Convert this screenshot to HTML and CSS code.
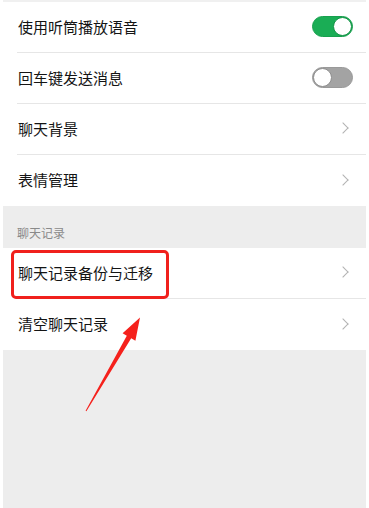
FILE: index.html
```html
<!doctype html>
<html>
<head>
  <meta charset="utf-8">
  <link rel="stylesheet" href="styles.css">
</head>
<body>
  <div class="screen">
    <div class="top-strip"></div>
    <div class="group">
      <div class="row">
        <span class="label">使用听筒播放语音</span>
        <span class="switch on"><span class="knob"></span></span>
      </div>
      <div class="row">
        <span class="label">回车键发送消息</span>
        <span class="switch"><span class="knob"></span></span>
      </div>
      <div class="row">
        <span class="label">聊天背景</span>
        <span class="chevron"></span>
      </div>
      <div class="row last">
        <span class="label">表情管理</span>
        <span class="chevron"></span>
      </div>
    </div>
    <div class="section-title">聊天记录</div>
    <div class="group">
      <div class="row">
        <span class="label">聊天记录备份与迁移</span>
        <span class="chevron"></span>
      </div>
      <div class="row last">
        <span class="label">清空聊天记录</span>
        <span class="chevron"></span>
      </div>
    </div>
    <div class="filler"></div>

    <div class="mark-box"></div>
    <svg class="mark-arrow" width="369" height="508" viewBox="0 0 369 508">
      <polygon fill="#f5211c" points="85.6,410.7 126.8,335.7 122.6,333.2 140,317.5 135.4,340.8 131.2,338.3 86.4,411.3"/>
    </svg>
  </div>
</body>
</html>
```

FILE: styles.css
```css
html, body {
  margin: 0;
  padding: 0;
}
body {
  font-family: "Noto Sans CJK SC", "Noto Sans", sans-serif;
  background: #fff;
}
.screen {
  position: relative;
  width: 363px;
  height: 508px;
  padding: 0 3px;
  display: flex;
  flex-direction: column;
  background: #fff;
  overflow: hidden;
}
.top-strip {
  height: 2px;
  background: #f0f0f0;
}
.group {
  background: #fff;
}
.row {
  height: 50px;
  box-sizing: border-box;
  display: flex;
  align-items: center;
  justify-content: space-between;
  padding: 0 14px 2px 1px;
  margin-left: 14px;
  border-bottom: 1px solid #e6e6e6;
  height: 51px;
}
.row.last {
  border-bottom: none;
}
.label {
  font-size: 15px;
  color: #141414;
}
.switch {
  width: 39px;
  height: 19px;
  border-radius: 11px;
  background: #a3a3a3;
  border: 1px solid #999;
  position: relative;
  margin-right: -1px;
}
.switch .knob {
  position: absolute;
  top: 0;
  left: 0;
  width: 19px;
  height: 19px;
  border-radius: 50%;
  background: #fff;
  box-sizing: border-box;
  border: 1px solid #8e8e8e;
}
.switch.on {
  background: #1aad55;
  border-color: #18a04e;
}
.switch.on .knob {
  left: auto;
  right: 0;
  border-color: #149447;
}
.chevron {
  width: 7px;
  height: 7px;
  border-top: 1px solid #b2b2b2;
  border-right: 1px solid #b2b2b2;
  transform: rotate(45deg);
  margin-right: 5px;
}
.section-title {
  background: #ededed;
  height: 42px;
  box-sizing: border-box;
  padding: 18px 0 0 14px;
  font-size: 12px;
  color: #8a8a8a;
}
.filler {
  flex: 1;
  background: #ededed;
}
.mark-box {
  position: absolute;
  left: 11px;
  top: 250px;
  width: 152px;
  height: 43px;
  border: 3px solid #f0201c;
  border-radius: 5px;
}
.mark-arrow {
  position: absolute;
  left: 0;
  top: 0;
}
```
